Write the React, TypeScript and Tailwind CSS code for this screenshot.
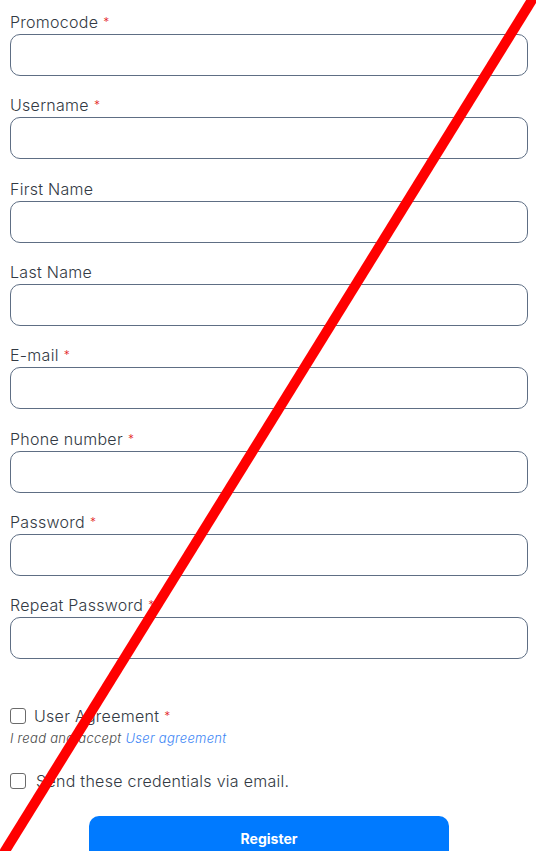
import React from 'react';

const fields = [
  { label: 'Promocode', required: true },
  { label: 'Username', required: true },
  { label: 'First Name', required: false },
  { label: 'Last Name', required: false },
  { label: 'E-mail', required: true },
  { label: 'Phone number', required: true },
  { label: 'Password', required: true },
  { label: 'Repeat Password', required: true },
];

const Star = () => <span className="ml-[5px] text-[12px] align-top text-[#e31b23]">*</span>;

export default function App() {
  return (
    <div className="relative w-[536px] h-[851px] overflow-hidden bg-white font-['Inter',sans-serif] text-[#333a44] tracking-[0.28px]">
      <form className="pl-[10px] pr-[8px] pt-[12px]">
        {fields.map((f) => (
          <div key={f.label} className="mb-[19.33px]">
            <label className="block h-[20px] text-[16px] leading-[20px] font-light">
              {f.label}
              {f.required && <Star />}
            </label>
            <input
              type={f.label.includes('Password') ? 'password' : 'text'}
              className="mt-[2px] block w-full h-[42px] rounded-[10px] border border-[#5e6e84] bg-white px-3 outline-none"
            />
          </div>
        ))}

        {/* agreement */}
        <div className="mt-[47px] flex items-center h-[20px]">
          <span className="w-[16px] h-[16px] rounded-[3px] border border-[#6b6b6b]" />
          <span className="ml-[8px] text-[16px] font-light leading-[20px]">
            User Agreement
            <Star />
          </span>
        </div>
        <p className="mt-[4px] text-[13px] leading-[16px] italic font-light text-[#4a4a4a]">
          I read and accept <span className="text-[#3d86f5]">User agreement</span>
        </p>

        <div className="mt-[25px] flex items-center h-[20px]">
          <span className="w-[16px] h-[16px] rounded-[3px] border border-[#6b6b6b]" />
          <span className="ml-[10px] text-[16px] font-light leading-[20px]">Send these credentials via email.</span>
        </div>

        <button
          type="button"
          className="mt-[25px] mx-auto block w-[360px] h-[44px] rounded-[10px] bg-[#007aff] text-white text-[14px] font-bold tracking-normal"
        >
          Register
        </button>
      </form>

      {/* red strike-through drawn over the page */}
      <svg
        className="absolute top-0 left-0 pointer-events-none"
        width="536"
        height="851"
        viewBox="0 0 536 851"
      >
        <line x1="538.2" y1="-10" x2="-1.2" y2="861" stroke="#ff0000" strokeWidth="10" />
      </svg>
    </div>
  );
}
